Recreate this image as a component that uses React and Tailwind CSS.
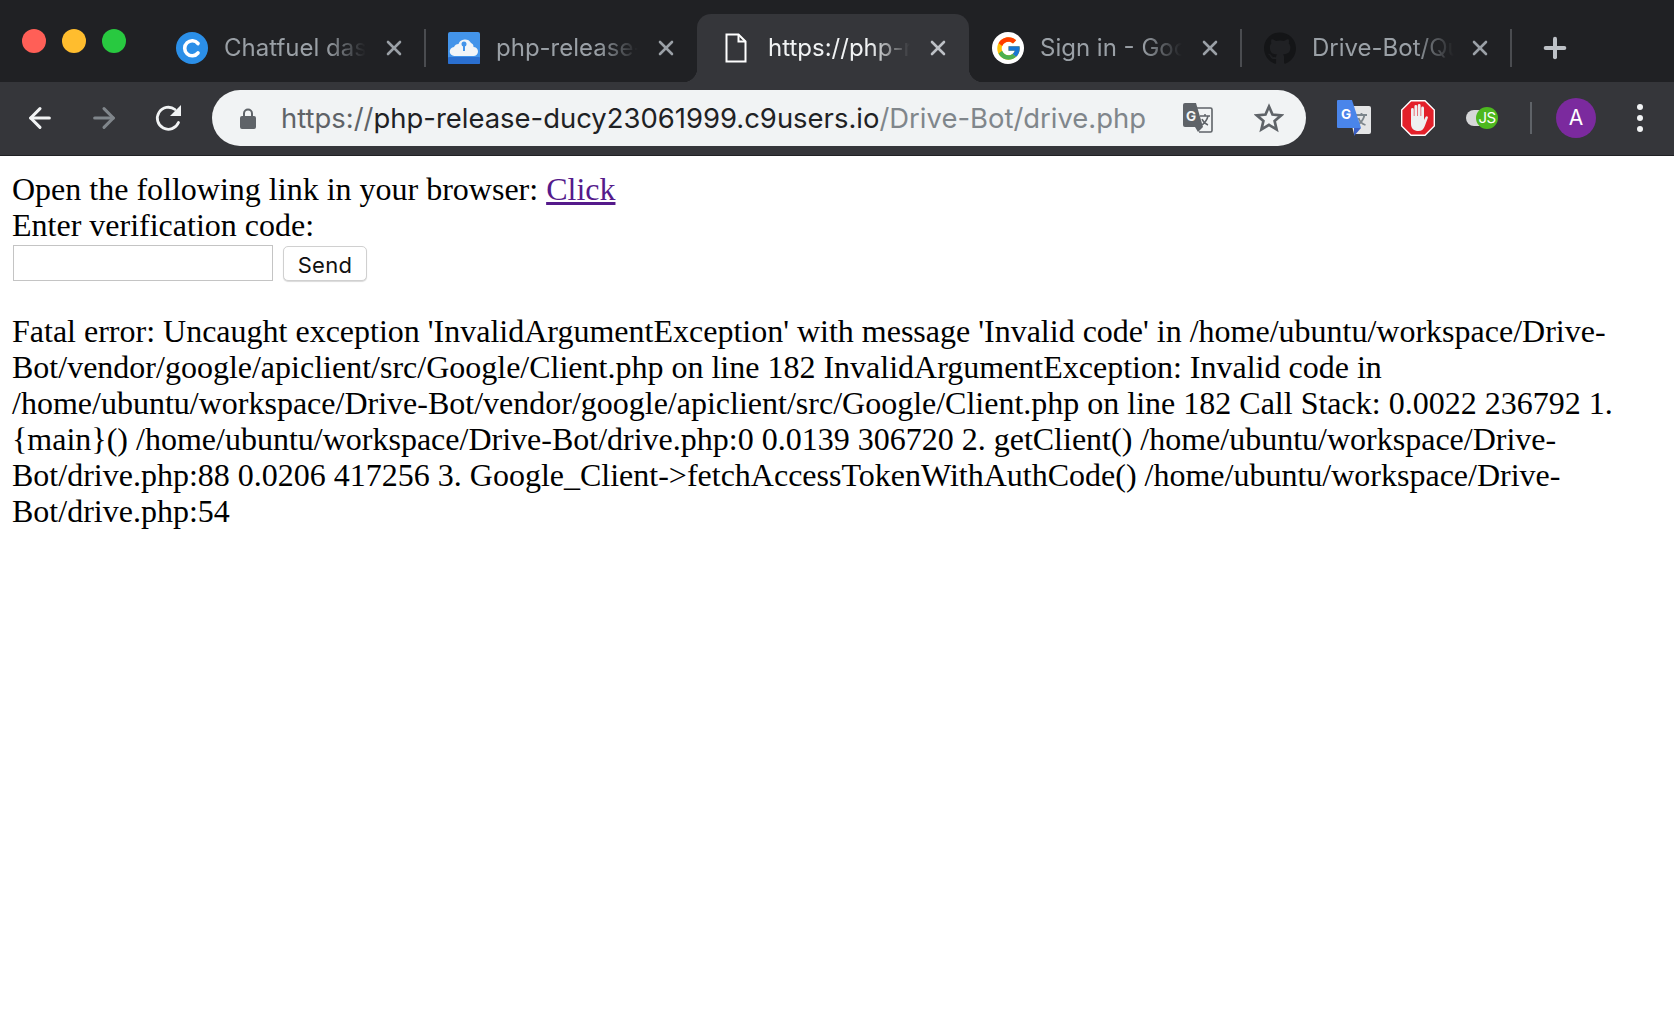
import { ArrowLeft, ArrowRight, X, Plus } from 'lucide-react'
import { FaGithub } from 'react-icons/fa'
import { FcGoogle } from 'react-icons/fc'

function ChatfuelIcon() {
  return (
    <svg width="32" height="32" viewBox="0 0 32 32">
      <circle cx="16" cy="16" r="16" fill="#2b8fe8" />
      <path d="M22 11.500a7.500 7.500 0 1 0 0 9.500" fill="none" stroke="#fff" strokeWidth="3.600" strokeLinecap="round" />
    </svg>
  )
}

function CloudIcon() {
  return (
    <svg width="32" height="32" viewBox="0 0 32 32">
      <rect width="32" height="32" rx="2" fill="#4394ea" />
      <rect y="25" width="32" height="7" rx="1" fill="#2a6fd0" />
      <path d="M6.500 24a4.500 4.500 0 0 1-.5-9 5 5 0 0 1 4.500-3A7 7 0 0 1 23 11a4 4 0 0 1 2.500 4A4.500 4.500 0 0 1 25.500 24z" fill="#f2f5f8" />
      <circle cx="16" cy="12" r="2.500" fill="#4394ea" />
      <rect x="15" y="13" width="2" height="6" fill="#4394ea" />
    </svg>
  )
}

function PageIcon() {
  return (
    <svg width="22" height="30" viewBox="0 0 22 30" fill="none" stroke="#fff" strokeWidth="2">
      <path d="M1.500 1.500h12l7 7v20h-19z" />
      <path d="M13.500 1.500v7h7" />
    </svg>
  )
}

function ReloadIcon() {
  return (
    <svg width="32" height="32" viewBox="0 0 32 32" fill="none">
      <path d="M25.500 20.500A11 11 0 1 1 22 7.500" stroke="#f1f3f4" strokeWidth="2.800" strokeLinecap="round" />
      <path d="M28 3v11H17z" fill="#f1f3f4" />
    </svg>
  )
}

function StarIcon() {
  return (
    <svg width="30" height="30" viewBox="0 0 30 30" fill="none">
      <path d="M15 3.500l3.500 8 8.700.8-6.600 5.700 2 8.500L15 21.900l-7.600 4.600 2-8.500-6.600-5.700 8.700-.8z" stroke="#5f6368" strokeWidth="2.700" />
    </svg>
  )
}

function TranslateIcon() {
  return (
    <svg width="30" height="30" viewBox="0 0 30 30">
      <path d="M11 5h16.500a1.500 1.500 0 0 1 1.500 1.500v21a1.500 1.500 0 0 1-1.500 1.500H16" fill="none" stroke="#5f6368" strokeWidth="1.600" />
      <path d="M2 0h11l7 24H2a2 2 0 0 1-2-2V2a2 2 0 0 1 2-2z" fill="#5f6368" />
      <path d="M12 24h8l-5 5z" fill="#5f6368" />
      <text x="3" y="17.500" fontFamily="Inter, sans-serif" fontWeight="700" fontSize="13.500" fill="#f1f3f4">G</text>
      <path d="M17 13h10M22 11v2M25 13c-1 4.500-3.500 7-6 9M19 16c1 2.500 3.500 5 6 6" fill="none" stroke="#5f6368" strokeWidth="1.500" />
    </svg>
  )
}

function GoogleTranslateExt() {
  return (
    <svg width="34" height="36" viewBox="0 0 34 36">
      <path d="M10 6h22a2 2 0 0 1 2 2v24a2 2 0 0 1-2 2H17z" fill="#e4e5e6" />
      <path d="M19 15h11M24.500 13v2M27.500 15c-1 5-4 8-7 10M21.500 18c1 3 4 6 7 7" fill="none" stroke="#7d868c" strokeWidth="1.800" />
      <path d="M0 1a1 1 0 0 1 1-1h14l9 28H1a1 1 0 0 1-1-1z" fill="#4a85ea" />
      <path d="M17 28h7l-7 8z" fill="#3a5fc4" />
      <text x="4" y="19" fontFamily="Inter, sans-serif" fontWeight="700" fontSize="13.500" fill="#fff">G</text>
    </svg>
  )
}

function AdblockIcon() {
  return (
    <svg width="34" height="36" viewBox="0 0 34 36">
      <path d="M10 .7h14L33.300 10v16L24 35.300H10L.7 26V10z" fill="#e3202a" stroke="#fff" strokeWidth="1.400" />
      <path d="M10 18V9.500a1.400 1.400 0 0 1 2.800 0V16h.6V6.500a1.400 1.400 0 0 1 2.800 0V16h.6V5.500a1.400 1.400 0 0 1 2.800 0V16h.6V8a1.400 1.400 0 0 1 2.800 0V20l1.500-3c1-1.500 3-.5 2.300 1l-3 8c-1 3-3 5-6.300 5-4.500 0-7.500-2.500-7.500-7z" fill="#eef0f1" />
    </svg>
  )
}

function JsToggleIcon() {
  return (
    <div className="relative h-[22px] w-[32px]">
      <div className="absolute left-0 top-[3px] h-[16px] w-[26px] rounded-full bg-[#d6d7d8]" />
      <div className="absolute left-[10px] top-0 flex h-[22px] w-[22px] items-center justify-center rounded-full bg-[#4db81f] text-[15px] font-normal tracking-[-0.5px] text-white [font-family:Inter,sans-serif]">
        JS
      </div>
    </div>
  )
}

const tabs = [
  { title: 'Chatfuel dashboard', icon: <ChatfuelIcon />, sep: true },
  { title: 'php-release-ducy', icon: <CloudIcon />, sep: false },
  { title: 'https://php-release', icon: <PageIcon />, active: true, sep: false },
  { title: 'Sign in - Google Accounts', google: true, sep: true },
  { title: 'Drive-Bot/Quickstart', icon: <FaGithub size={33} color="#141517" />, sep: true, narrow: true },
]

function Tab({ tab }) {
  return (
    <div
      className={`relative flex h-[68px] shrink-0 items-center pl-[23px] pr-[19px] ${
        tab.narrow ? 'w-[270px]' : 'w-[272px]'
      } ${tab.active ? 'rounded-t-[14px] bg-[#35363a]' : ''}`}
    >
      {tab.active && (
        <>
          <div className="absolute bottom-0 left-[-14px] h-[14px] w-[14px] bg-[radial-gradient(circle_at_0_0,transparent_14px,#35363a_14.5px)]" />
          <div className="absolute bottom-0 right-[-14px] h-[14px] w-[14px] bg-[radial-gradient(circle_at_100%_0,transparent_14px,#35363a_14.5px)]" />
        </>
      )}
      <div className="flex w-[32px] shrink-0 items-center justify-center">
        {tab.google ? (
          <div className="flex h-[32px] w-[32px] items-center justify-center rounded-full bg-white">
            <FcGoogle size={27} />
          </div>
        ) : (
          tab.icon
        )}
      </div>
      <div
        className={`ml-[16px] w-[142px] overflow-hidden whitespace-nowrap text-[24px] leading-[30px] [mask-image:linear-gradient(to_right,black_72%,transparent_100%)] ${
          tab.active ? 'text-[#f1f3f4]' : 'text-[#9aa0a6]'
        }`}
      >
        {tab.title}
      </div>
      <X size={24} strokeWidth={2.6} className={`ml-auto ${tab.active ? 'text-[#bdc1c6]' : 'text-[#9aa0a6]'}`} />
      {tab.sep && <div className="absolute right-[-1px] top-[15px] h-[38px] w-[2px] bg-[#4a4c50]" />}
    </div>
  )
}

export default function App() {
  return (
    <div className="relative flex h-screen flex-col overflow-hidden bg-white [font-family:'Liberation_Serif',serif]">
      {/* Tab strip */}
      <div className="flex h-[82px] shrink-0 items-end bg-[#202124] pl-[153px] [font-family:Inter,sans-serif]">
        <div className="absolute left-[22px] top-[29px] flex gap-[16px]">
          <div className="h-[24px] w-[24px] rounded-full bg-[#ff5f57]" />
          <div className="h-[24px] w-[24px] rounded-full bg-[#ffbd2e]" />
          <div className="h-[24px] w-[24px] rounded-full bg-[#28c940]" />
        </div>
        {tabs.map((tab) => (
          <Tab key={tab.title} tab={tab} />
        ))}
        <Plus size={32} strokeWidth={3} className="mb-[18px] ml-[28px] text-[#bdc1c6]" />
      </div>

      {/* Toolbar */}
      <div className="flex h-[74px] shrink-0 items-center border-b border-[#202124] bg-[#35363a] pb-[1px] [font-family:Inter,sans-serif]">
        <ArrowLeft size={32} strokeWidth={2.3} className="ml-[24px] text-[#f1f3f4]" />
        <ArrowRight size={32} strokeWidth={2.3} className="ml-[32px] text-[#80868b]" />
        <div className="ml-[33px]"><ReloadIcon /></div>
        <div className="ml-[27px] flex h-[56px] w-[1094px] items-center rounded-full bg-[#f1f3f4] pl-[28px]">
          <svg width="16" height="21" viewBox="0 0 16 21" fill="#5f6368">
            <path d="M3 8V5.500a5 5 0 0 1 10 0V8h1a2 2 0 0 1 2 2v9a2 2 0 0 1-2 2H2a2 2 0 0 1-2-2v-9a2 2 0 0 1 2-2zm2 0h6V5.500a3 3 0 0 0-6 0z" />
          </svg>
          <div className="ml-[25px] mt-[2px] whitespace-nowrap text-[27.45px] text-[#202124]">
            <span className="text-[#5f6368]">https://</span>
            php-release-ducy23061999.c9users.io
            <span className="text-[#80868b]">/Drive-Bot/drive.php</span>
          </div>
          <div className="ml-auto flex items-center pr-[22px]">
            <TranslateIcon />
            <div className="ml-[41px]"><StarIcon /></div>
          </div>
        </div>
        <div className="ml-[31px]"><GoogleTranslateExt /></div>
        <div className="ml-[30px]"><AdblockIcon /></div>
        <div className="ml-[31px]"><JsToggleIcon /></div>
        <div className="ml-[32px] h-[32px] w-[2px] bg-[#5f6368]" />
        <div className="ml-[24px] flex h-[40px] w-[40px] items-center justify-center rounded-full bg-[#7b2a9e] text-[21px] text-white">
          A
        </div>
        <div className="ml-[41px] flex flex-col gap-[5px]">
          <div className="h-[6px] w-[6px] rounded-full bg-[#f1f3f4]" />
          <div className="h-[6px] w-[6px] rounded-full bg-[#f1f3f4]" />
          <div className="h-[6px] w-[6px] rounded-full bg-[#f1f3f4]" />
        </div>
      </div>

      {/* Page body */}
      <div className="px-[12px] pt-[15px] text-[32px] leading-[36px] text-black">
        <div>
          Open the following link in your browser: <a className="text-[#551a8b] underline">Click</a>
        </div>
        <div>Enter verification code:</div>
        <div className="flex items-center pt-[2px]">
          <input className="ml-[1px] h-[36px] w-[260px] border border-[#c4c4c4] bg-white" />
          <button className="ml-[10px] h-[35px] w-[84px] rounded-[5px] border border-[#d0d0d0] bg-white text-[22px] tracking-[0.3px] text-[#111] shadow-[0_1px_1px_rgba(0,0,0,0.15)] [font-family:Inter,sans-serif]">
            Send
          </button>
        </div>
        <div className="mt-[32px]">
          Fatal error: Uncaught exception 'InvalidArgumentException' with message 'Invalid code' in /home/ubuntu/workspace/Drive-Bot/vendor/google/apiclient/src/Google/Client.php on line 182 InvalidArgumentException: Invalid code in /home/ubuntu/workspace/Drive-Bot/vendor/google/apiclient/src/Google/Client.php on line 182 Call Stack: 0.0022 236792 1. {'{'}main{'}'}() /home/ubuntu/workspace/Drive-Bot/drive.php:0 0.0139 306720 2. getClient() /home/ubuntu/workspace/Drive-Bot/drive.php:88 0.0206 417256 3. Google_Client-&gt;fetchAccessTokenWithAuthCode() /home/ubuntu/workspace/Drive-Bot/drive.php:54
        </div>
      </div>
    </div>
  )
}
